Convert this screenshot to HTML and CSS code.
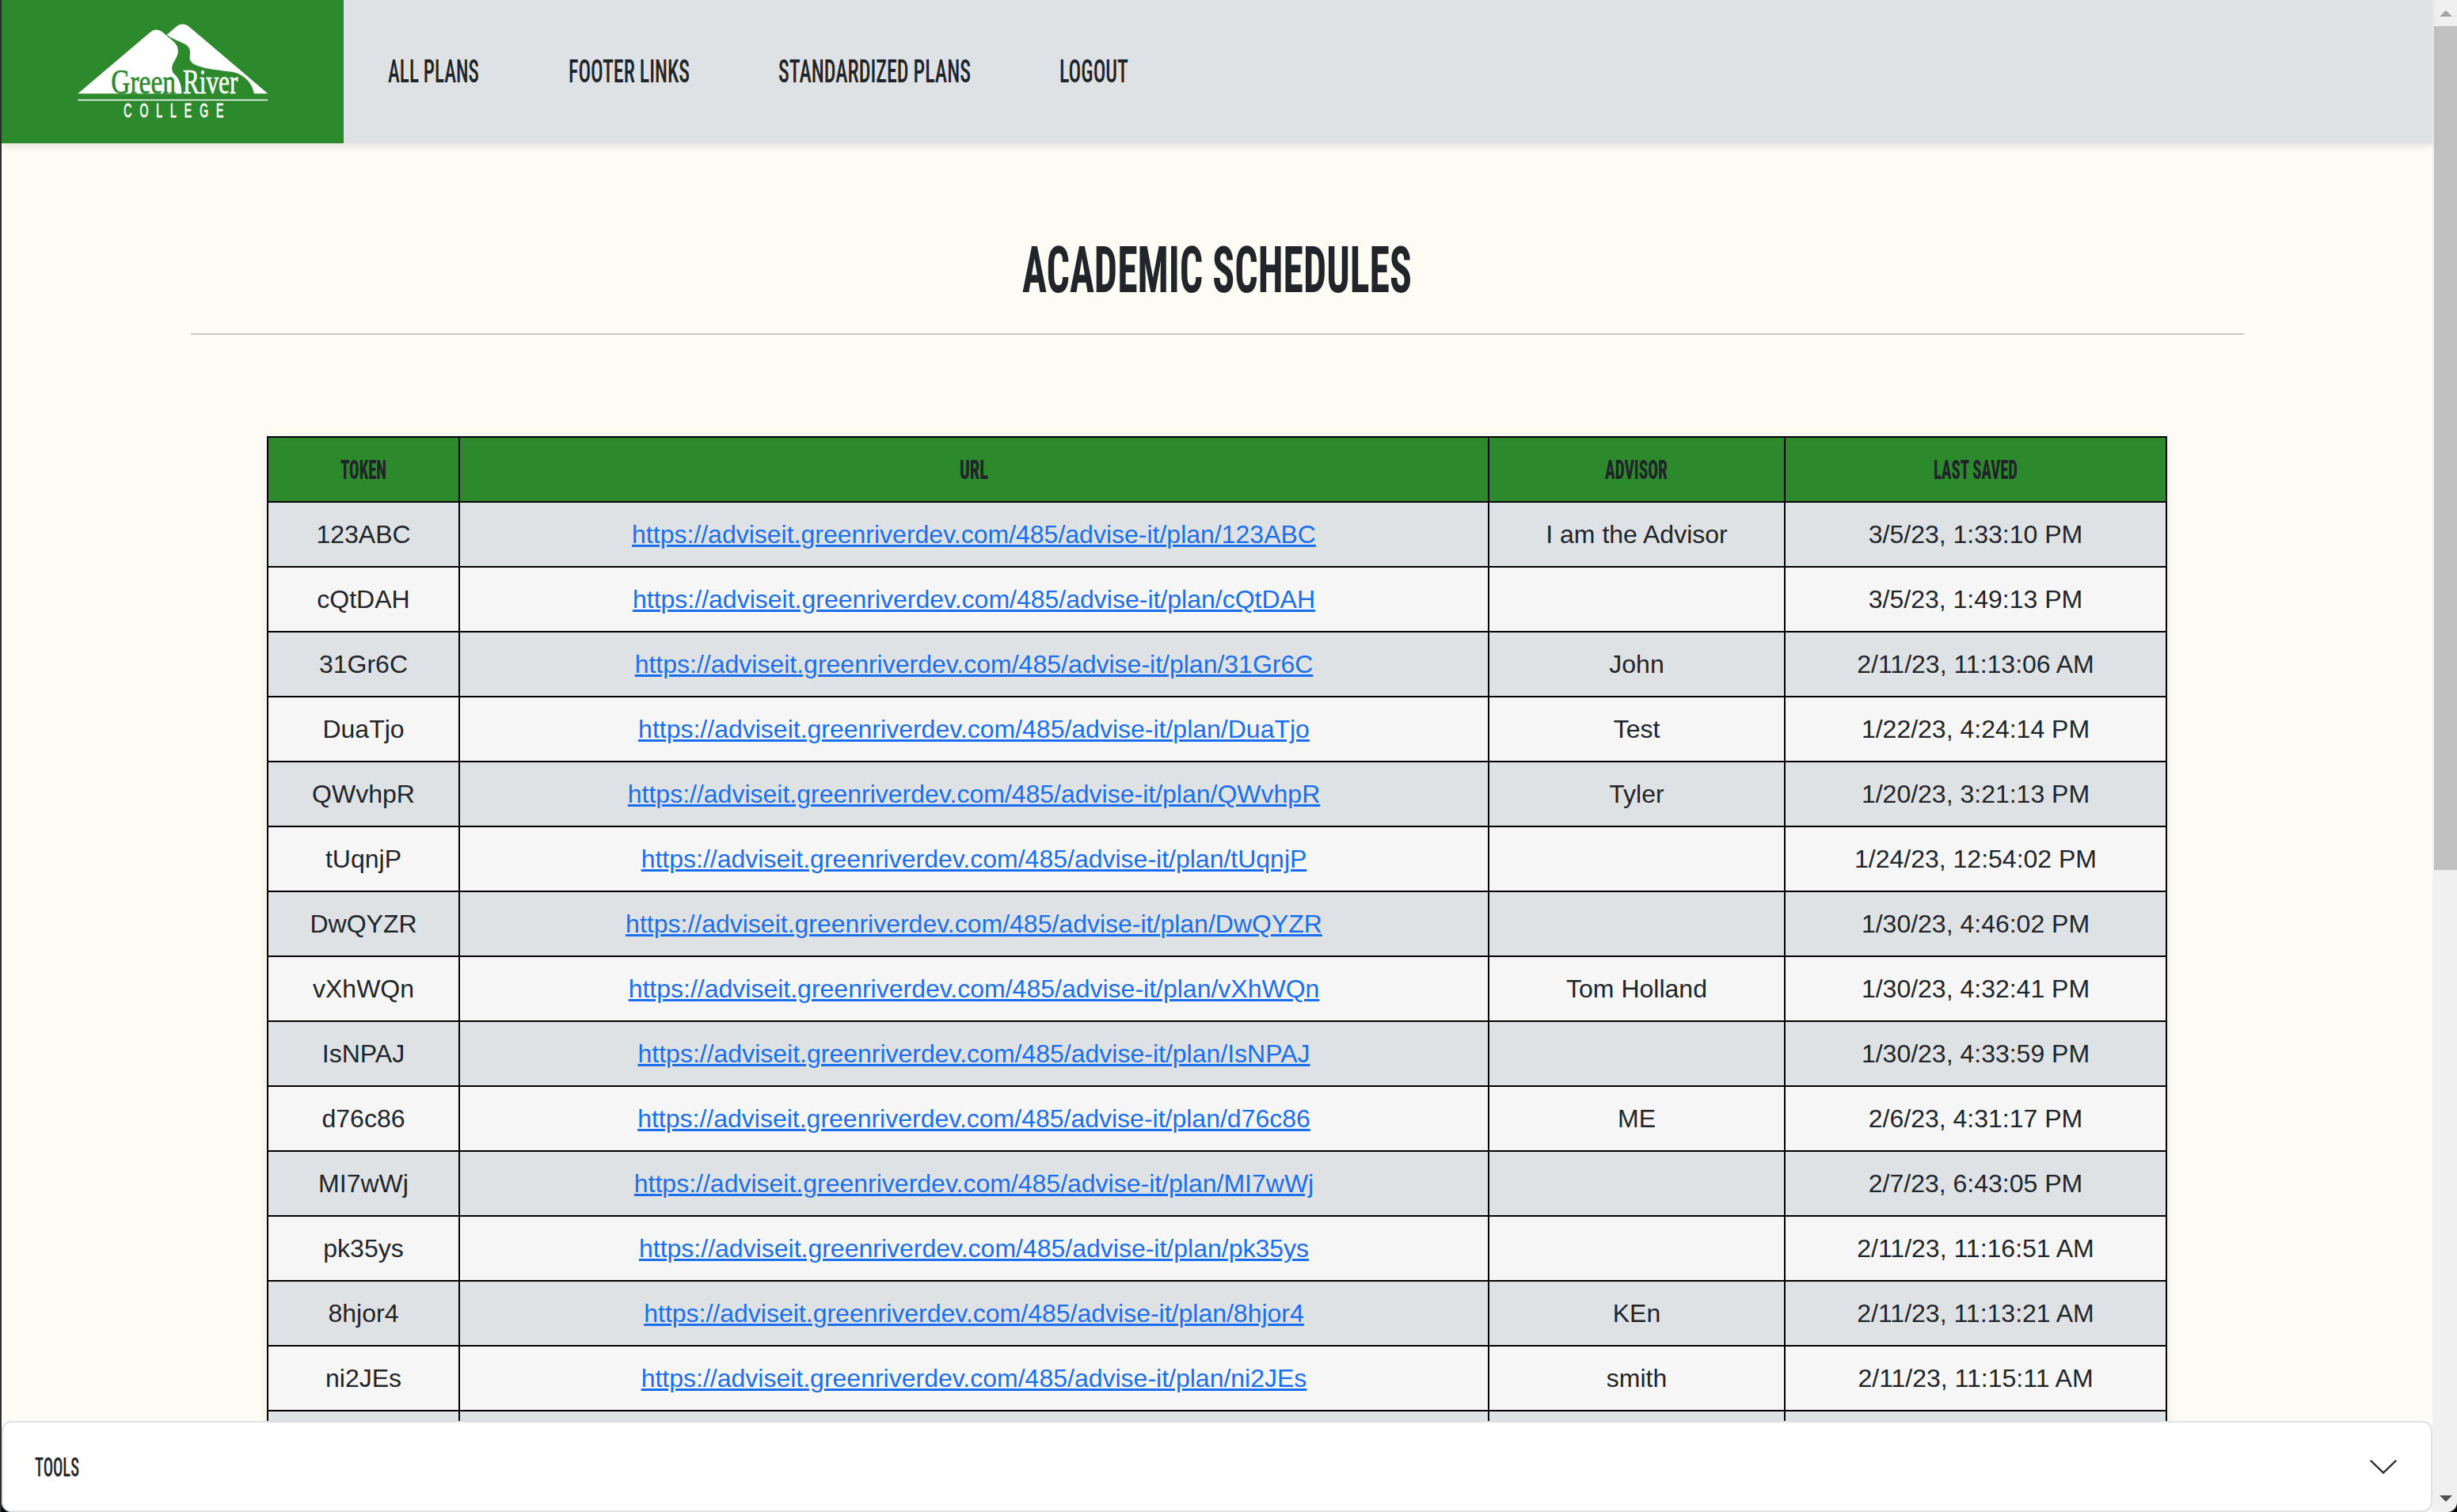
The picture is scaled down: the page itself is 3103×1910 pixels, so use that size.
FILE: index.html
```html
<!DOCTYPE html>
<html lang="en">
<head>
<meta charset="utf-8">
<title>Academic Schedules</title>
<link rel="stylesheet" href="styles.css">
</head>
<body>
<div class="page">
  <header class="header">
    <a class="brand">
      <svg class="logo" viewBox="290 85 730 370">
        <path fill="#fff" d="M294 356 L568 123 Q590 105 613 121 L655 157 C677 176 679 201 664 225 C648 250 645 268 662 284 C680 302 688 330 687 356Z"/>
        <path fill="#fff" d="M631 133 L670 99 Q691 86 712 99 L1014 356 H962 C957 327 940 304 921 291 C900 275 875 272 850 270 C805 264 775 261 745 249 C721 240 715 227 719 209 C721 190 716 177 697 167 C676 155 651 149 631 133Z"/>
        <text class="logo-name logo-green" x="420" y="354" textLength="245" lengthAdjust="spacingAndGlyphs">Green</text>
        <text class="logo-name logo-white" x="692" y="356" textLength="208" lengthAdjust="spacingAndGlyphs">River</text>
        <rect x="294" y="378" width="720" height="4.5" fill="#fff"/>
        <text class="logo-college" transform="translate(468 446) scale(.6 1)">COLLEGE</text>
      </svg>
    </a>
    <nav class="nav">
      <a><svg class="label" width="114" height="30"><text x="-1" y="29.5" textLength="115" lengthAdjust="spacingAndGlyphs">ALL PLANS</text></svg></a>
      <a><svg class="label" width="151" height="30"><text x="-1" y="29.5" textLength="153" lengthAdjust="spacingAndGlyphs">FOOTER LINKS</text></svg></a>
      <a><svg class="label" width="242" height="30"><text x="-1" y="29.5" textLength="243" lengthAdjust="spacingAndGlyphs">STANDARDIZED PLANS</text></svg></a>
      <a><svg class="label" width="85" height="30"><text x="-2" y="29.5" textLength="87" lengthAdjust="spacingAndGlyphs">LOGOUT</text></svg></a>
    </nav>
  </header>
  <main class="content">
    <h1 class="title"><svg class="label" width="490" height="58"><text x="-1" y="58" textLength="492" lengthAdjust="spacingAndGlyphs">ACADEMIC SCHEDULES</text></svg></h1>
    <hr class="rule">
    <table class="plans">
      <colgroup><col class="c-token"><col class="c-url"><col class="c-advisor"><col class="c-saved"></colgroup>
      <thead><tr>
        <th><svg class="label" width="56" height="24"><text x="-1" y="24" textLength="58" lengthAdjust="spacingAndGlyphs">TOKEN</text></svg></th>
        <th><svg class="label" width="34" height="24"><text x="-1" y="24" textLength="36" lengthAdjust="spacingAndGlyphs">URL</text></svg></th>
        <th><svg class="label" width="78" height="24"><text x="-1" y="24" textLength="79" lengthAdjust="spacingAndGlyphs">ADVISOR</text></svg></th>
        <th><svg class="label" width="104" height="24"><text x="-1" y="24" textLength="106" lengthAdjust="spacingAndGlyphs">LAST SAVED</text></svg></th>
      </tr></thead>
      <tbody>
        <tr><td>123ABC</td><td><a href="#">https://adviseit.greenriverdev.com/485/advise-it/plan/123ABC</a></td><td>I am the Advisor</td><td>3/5/23, 1:33:10 PM</td></tr>
        <tr><td>cQtDAH</td><td><a href="#">https://adviseit.greenriverdev.com/485/advise-it/plan/cQtDAH</a></td><td></td><td>3/5/23, 1:49:13 PM</td></tr>
        <tr><td>31Gr6C</td><td><a href="#">https://adviseit.greenriverdev.com/485/advise-it/plan/31Gr6C</a></td><td>John</td><td>2/11/23, 11:13:06 AM</td></tr>
        <tr><td>DuaTjo</td><td><a href="#">https://adviseit.greenriverdev.com/485/advise-it/plan/DuaTjo</a></td><td>Test</td><td>1/22/23, 4:24:14 PM</td></tr>
        <tr><td>QWvhpR</td><td><a href="#">https://adviseit.greenriverdev.com/485/advise-it/plan/QWvhpR</a></td><td>Tyler</td><td>1/20/23, 3:21:13 PM</td></tr>
        <tr><td>tUqnjP</td><td><a href="#">https://adviseit.greenriverdev.com/485/advise-it/plan/tUqnjP</a></td><td></td><td>1/24/23, 12:54:02 PM</td></tr>
        <tr><td>DwQYZR</td><td><a href="#">https://adviseit.greenriverdev.com/485/advise-it/plan/DwQYZR</a></td><td></td><td>1/30/23, 4:46:02 PM</td></tr>
        <tr><td>vXhWQn</td><td><a href="#">https://adviseit.greenriverdev.com/485/advise-it/plan/vXhWQn</a></td><td>Tom Holland</td><td>1/30/23, 4:32:41 PM</td></tr>
        <tr><td>IsNPAJ</td><td><a href="#">https://adviseit.greenriverdev.com/485/advise-it/plan/IsNPAJ</a></td><td></td><td>1/30/23, 4:33:59 PM</td></tr>
        <tr><td>d76c86</td><td><a href="#">https://adviseit.greenriverdev.com/485/advise-it/plan/d76c86</a></td><td>ME</td><td>2/6/23, 4:31:17 PM</td></tr>
        <tr><td>MI7wWj</td><td><a href="#">https://adviseit.greenriverdev.com/485/advise-it/plan/MI7wWj</a></td><td></td><td>2/7/23, 6:43:05 PM</td></tr>
        <tr><td>pk35ys</td><td><a href="#">https://adviseit.greenriverdev.com/485/advise-it/plan/pk35ys</a></td><td></td><td>2/11/23, 11:16:51 AM</td></tr>
        <tr><td>8hjor4</td><td><a href="#">https://adviseit.greenriverdev.com/485/advise-it/plan/8hjor4</a></td><td>KEn</td><td>2/11/23, 11:13:21 AM</td></tr>
        <tr><td>ni2JEs</td><td><a href="#">https://adviseit.greenriverdev.com/485/advise-it/plan/ni2JEs</a></td><td>smith</td><td>2/11/23, 11:15:11 AM</td></tr>
        <tr><td></td><td></td><td></td><td></td></tr>
      </tbody>
    </table>
  </main>
  <footer class="tools">
    <svg class="label" width="56" height="24"><text y="23.5" textLength="56" lengthAdjust="spacingAndGlyphs">TOOLS</text></svg>
    <svg class="chevron" width="34" height="18" viewBox="0 0 34 18"><path d="M1.5 1.5 L17 16.5 L32.5 1.5"/></svg>
  </footer>
</div>
<div class="scrollbar">
  <svg class="arrow-up" width="16" height="8"><path fill="#a3a3a3" d="M0 8L8 0L16 8Z"/></svg>
  <div class="thumb"></div>
  <svg class="arrow-down" width="16" height="8"><path fill="#505050" d="M0 0H16L8 8Z"/></svg>
</div>
</body>
</html>
```
FILE: styles.css
```css
* { box-sizing: border-box; }

body {
  margin: 0;
  width: 3103px;
  height: 1910px;
  overflow: hidden;
  display: flex;
  border-left: 2px solid #2d2d2d;
  background: #000;
  color: #212529;
  font: 32px/48px "Liberation Sans", Arial, sans-serif;
}

.page {
  width: 3070px;
  display: flex;
  flex-direction: column;
  background: #fdfcf4;
  border-bottom-left-radius: 14px;
}

.label {
  display: block;
  overflow: visible;
  fill: #212529;
  font-family: Roboto, sans-serif;
  font-stretch: 75%;
}

.header {
  position: relative;
  z-index: 1;
  height: 181px;
  flex: none;
  display: flex;
  background: #dee2e5;
  box-shadow: 0 4px 8px rgba(0, 0, 0, .09);
}

.brand {
  width: 432px;
  padding: 28px 0 0 95px;
  background: #2c8a2c;
}
.logo { display: block; width: 243.3px; height: 123.3px; overflow: visible; }
.logo-name { font: 132px "Liberation Serif", serif; stroke-width: 2; }
.logo-green { fill: #2c8a2c; stroke: #2c8a2c; }
.logo-white { fill: #fff; stroke: #fff; }
.logo-college { font: 70px "Liberation Sans", sans-serif; letter-spacing: 50px; fill: #fff; stroke: #fff; stroke-width: 2.5; }

.nav {
  display: flex;
  gap: 114px;
  padding: 74px 0 0 57px;
}
.nav .label { font-size: 41px; font-weight: 500; }

.content {
  flex: 1;
  min-height: 0;
  overflow: hidden;
  padding-top: 130px;
}

.title {
  margin: 0;
  display: flex;
  justify-content: center;
}
.title .label { font-size: 81.5px; font-weight: 700; }

.rule {
  width: 2593px;
  height: 2px;
  margin: 52px auto 0;
  border: 0;
  background: #c6c8c3;
}

.plans {
  width: 2400px;
  margin: 128px auto 0;
  table-layout: fixed;
  border-collapse: collapse;
  text-align: center;
  box-shadow: 0 4px 12px rgba(0, 0, 0, .06);
}
.c-token { width: 242px; }
.c-url { width: 1300px; }
.c-advisor { width: 374px; }
.c-saved { width: 482px; }
.plans tr { height: 82px; }
.plans th, .plans td { padding: 0; border: 2px solid #000; }
.plans th { background: #2c8a2c; }
.plans th .label { margin: 0 auto; font-size: 34px; font-weight: 800; }
.plans tbody tr { background: #f6f6f6; }
.plans tbody tr:nth-child(odd) { background: #dee2e5; }
.plans a { color: #1a6ff0; text-decoration: underline; text-decoration-thickness: 3px; }

.tools {
  height: 115px;
  flex: none;
  display: flex;
  align-items: center;
  justify-content: space-between;
  padding: 0 43px 0 40px;
  background: #fff;
  border: 2px solid #dee2e6;
  border-radius: 12px;
}
.tools .label { font-size: 32.5px; font-weight: 500; }
.chevron { fill: none; stroke: #212529; stroke-width: 2.4; stroke-linecap: round; stroke-linejoin: round; }

.scrollbar {
  width: 31px;
  padding: 13px 0 13px 2px;
  display: flex;
  flex-direction: column;
  background: #f0f0f0;
  border-bottom-right-radius: 12px;
}
.arrow-up { margin-left: 7px; flex: none; }
.thumb { height: 1066px; margin-top: 12px; background: #c1c1c1; }
.arrow-down { margin: auto 0 0 7px; flex: none; }
```
